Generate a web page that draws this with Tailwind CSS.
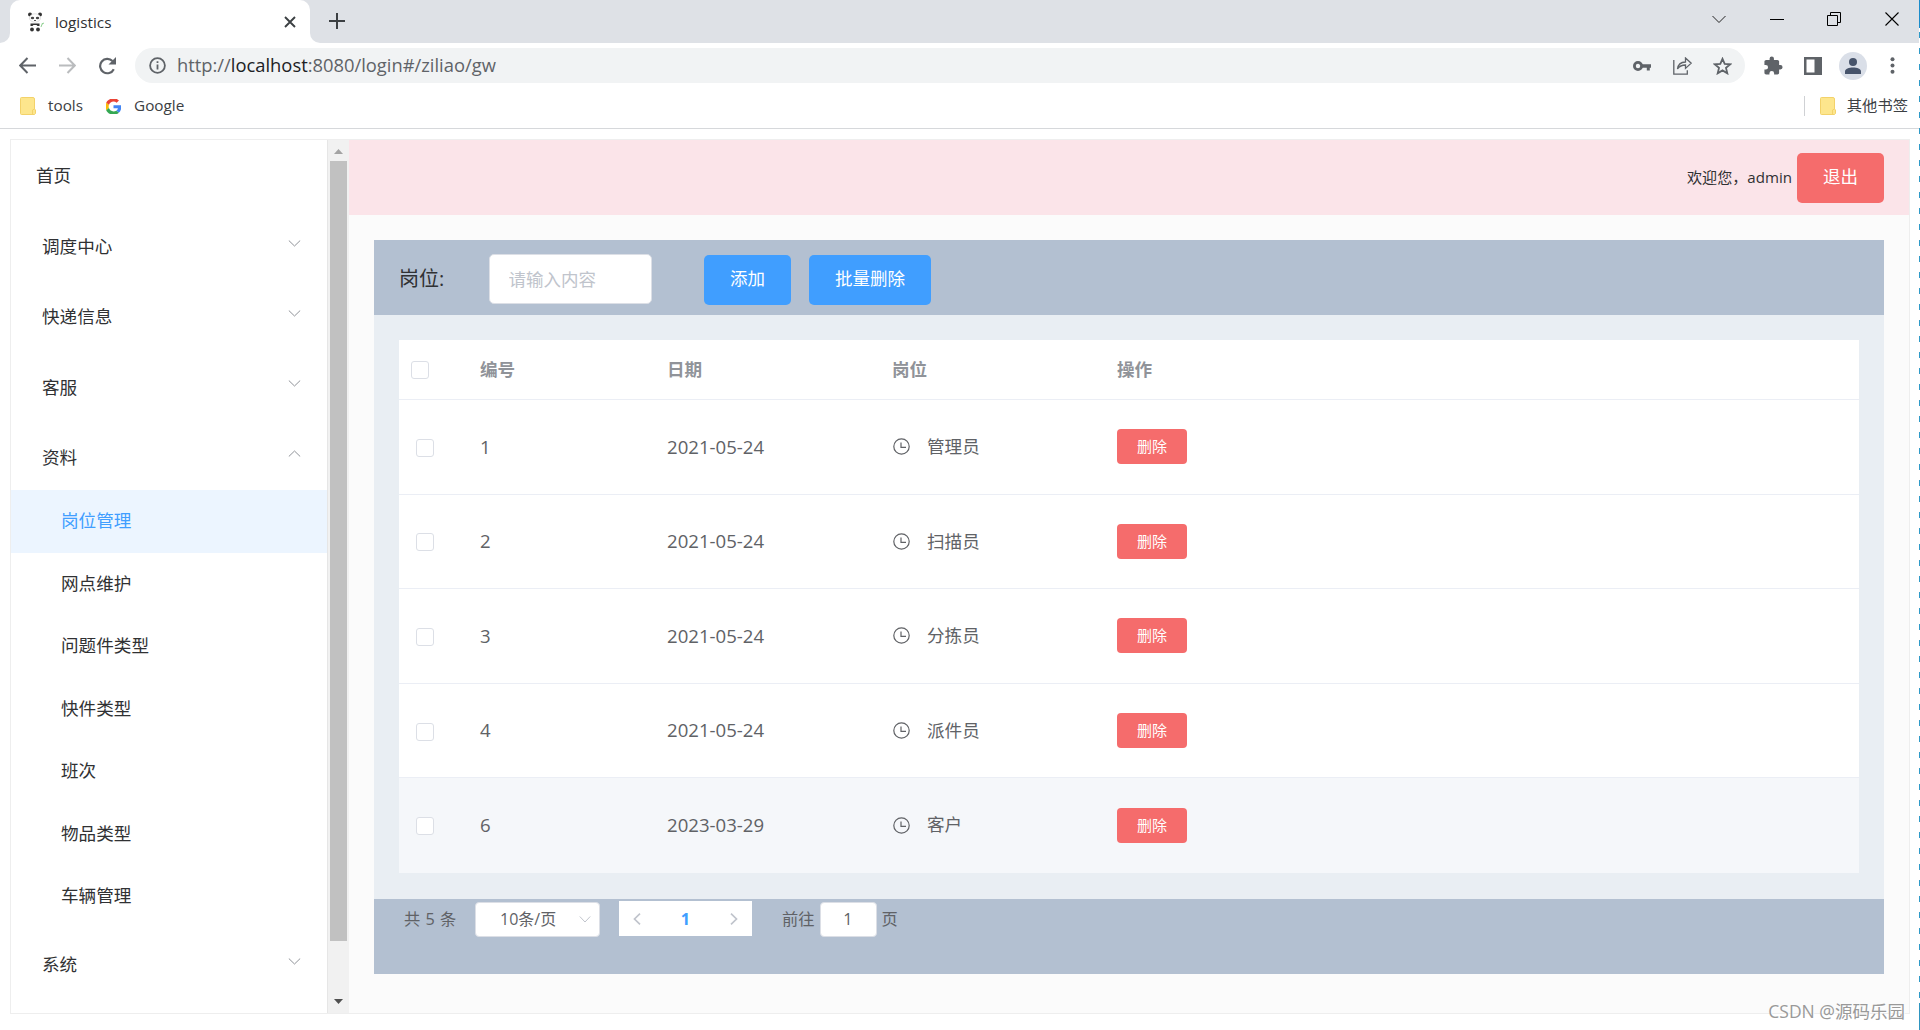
<!DOCTYPE html>
<html lang="zh-CN">
  <head>
    <meta charset="UTF-8" />
    <meta name="viewport" content="width=device-width, initial-scale=1.0" />
    <script src="https://cdn.jsdelivr.net/npm/@tailwindcss/browser@4"></script>
    <title>logistics</title>
  </head>
  <body
    class="relative w-[1920px] h-[1030px] overflow-hidden bg-white font-['Open_Sans','Noto_Sans_CJK_SC',sans-serif] text-[#303133]"
  >
    <!-- tab strip -->
    <div class="flex h-[43px] bg-[#dee1e6]">
      <div class="w-[10px] bg-white"><div class="h-full bg-[#dee1e6] rounded-br-[10px]"></div></div>
      <div class="flex items-center w-[300px] bg-white rounded-t-[10px] pl-[17px] pr-[14px]">
        <svg class="w-[19px] h-[20px]" viewBox="0 0 19 20">
          <circle cx="3" cy="2.5" r="2" fill="#333" />
          <circle cx="13" cy="2.5" r="2" fill="#333" />
          <ellipse cx="8" cy="6" rx="5.5" ry="4.2" fill="#fff" stroke="#ccc" stroke-width=".6" />
          <ellipse cx="5.5" cy="6" rx="1.7" ry="1.3" fill="#444" />
          <ellipse cx="10.5" cy="6" rx="1.7" ry="1.3" fill="#444" />
          <path d="M7 8.500h2" stroke="#555" />
          <path d="M3.500 11.500h9v2.500h-2l-1-1h-3l-1 1h-2z" fill="#333" />
          <circle cx="5" cy="17.500" r="1.900" fill="#333" />
          <circle cx="11" cy="17.500" r="1.900" fill="#333" />
          <path d="M14 15l1.500-4M15 12l2-1" stroke="#8fd092" />
        </svg>
        <span class="ml-[9px] mt-[2px] text-[15.300px] leading-none">logistics</span>
        <svg class="ml-auto w-[12px] h-[12px]" viewBox="0 0 12 12" stroke="#3c4043" stroke-width="1.900"><path d="M1 1l10 10M11 1L1 11" /></svg>
      </div>
      <div class="w-[10px] bg-white"><div class="h-full bg-[#dee1e6] rounded-bl-[10px]"></div></div>
      <svg class="ml-[9px] mt-[13px] w-[16px] h-[16px]" viewBox="0 0 16 16" stroke="#3c4043" stroke-width="2"><path d="M8 0v16M0 8h16" /></svg>
      <div class="ml-auto flex items-center h-[37px] gap-[43.500px] pr-[21.500px]">
        <svg class="w-[14px] h-[14px]" viewBox="0 0 14 14" fill="none" stroke="#222"><path d="M.5 4l6.500 6.500L13.500 4" /></svg>
        <svg class="w-[14px] h-[14px]" viewBox="0 0 14 14" stroke="#000"><path d="M0 7.500h14" /></svg>
        <svg class="w-[14px] h-[14px]" viewBox="0 0 14 14" fill="none" stroke="#000"><path d="M.5 3.500h10v10H.5zM3.500 3.500v-3h10v10h-3" /></svg>
        <svg class="w-[14px] h-[14px]" viewBox="0 0 14 14" stroke="#000" stroke-width="1.100"><path d="M.5 .5l13 13M13.500 .5l-13 13" /></svg>
      </div>
    </div>

    <!-- address bar -->
    <div class="flex items-center h-[45px]">
      <svg class="ml-[19px] w-[17px] h-[17px]" viewBox="0 0 17 17" fill="none" stroke="#5f6368" stroke-width="2"><path d="M17 8.500H1.500M8.500 1L1.200 8.500 8.500 16" /></svg>
      <svg class="ml-[23px] w-[17px] h-[17px]" viewBox="0 0 17 17" fill="none" stroke="#babcbe" stroke-width="2"><path d="M0 8.500h15.500M8.500 1l7.300 7.500L8.500 16" /></svg>
      <svg class="ml-[22px] w-[19px] h-[18px]" viewBox="0 0 19 18" fill="none" stroke="#5f6368" stroke-width="2.200"><path d="M15.800 12.200A7.200 7.200 0 1 1 14.500 4" /><path d="M18 0v7.500h-7.500z" fill="#5f6368" stroke="none" /></svg>
      <div class="ml-[18px] flex items-center w-[1610px] h-[35px] rounded-full bg-[#f1f3f4] pl-[14px] pr-[13px]">
        <svg class="w-[17px] h-[17px]" viewBox="0 0 17 17" fill="none" stroke="#5f6368" stroke-width="1.800"><circle cx="8.500" cy="8.500" r="7.400" /><path d="M8.500 7.500v5M8.500 4.200v1.900" /></svg>
        <span class="ml-[11px] text-[18.350px] leading-none text-[#5f6368]">http://<span class="text-[#202124]">localhost</span>:8080/login#/ziliao/gw</span>
        <svg class="ml-auto w-[18px] h-[12px]" viewBox="0 0 18 12"><circle cx="5" cy="6" r="3.600" fill="none" stroke="#5f6368" stroke-width="2.800" /><path d="M9 4.200h9v3.500h-1.200V10.500h-3V7.700H9z" fill="#5f6368" /></svg>
        <svg class="ml-[22px] w-[19px] h-[18px]" viewBox="0 0 19 18" fill="none" stroke="#5f6368" stroke-width="1.300"><path d="M.8 3v14.200h13.500v-4" /><path d="M4.500 12c.5-4.500 3.500-6.800 8-7V1l5.700 5.200-5.700 5.200V8c-3.500 0-6 1-8 4z" /></svg>
        <svg class="ml-[21px] w-[19px] h-[18px]" viewBox="0 0 19 18" fill="none" stroke="#5f6368" stroke-width="1.800"><path d="M9.500 1.800l2.200 5 5.500.5-4.200 3.600 1.300 5.400-4.800-2.900-4.800 2.900L6 10.900 1.800 7.300l5.500-.5z" /></svg>
      </div>
      <svg class="ml-[19px] w-[19px] h-[19px]" viewBox="1.500 0.500 22 22" fill="#5f6368"><path d="M20.500 11H19V7c0-1.100-.9-2-2-2h-4V3.500a2.500 2.500 0 0 0-5 0V5H4c-1.100 0-2 .9-2 2v3.800h1.500a2.700 2.700 0 0 1 0 5.400H2V20c0 1.100.9 2 2 2h3.800v-1.500a2.700 2.700 0 0 1 5.400 0V22H17c1.100 0 2-.9 2-2v-4h1.500a2.500 2.500 0 0 0 0-5z" /></svg>
      <svg class="ml-[21px] w-[18px] h-[18px]" viewBox="0 0 18 18"><path d="M0 0h18v18H0zM2.500 2.500v13h8v-13z" fill="#5f6368" fill-rule="evenodd" /></svg>
      <svg class="ml-[17px] w-[28px] h-[28px]" viewBox="0 0 28 28"><circle cx="14" cy="14" r="14" fill="#dadfe8" /><g fill="#47546b"><circle cx="14" cy="10" r="4" /><path d="M6 22v-2.500c0-2.800 4-4 8-4s8 1.200 8 4V22z" /></g></svg>
      <svg class="ml-[23px] w-[5px] h-[17px]" viewBox="0 0 5 17" fill="#5f6368"><circle cx="2.500" cy="2.200" r="2" /><circle cx="2.500" cy="8.500" r="2" /><circle cx="2.500" cy="14.800" r="2" /></svg>
    </div>

    <!-- bookmarks -->
    <div class="flex items-center h-[41px] pb-[4px] border-b border-[#d6d8db] text-[15.300px] leading-none text-[#3c4043]">
      <svg class="ml-[20px] w-[16px] h-[18px]" viewBox="0 0 16 18"><path d="M1.500.5h11.500a1.500 1.500 0 0 1 1.500 1.500v10l1 1v3.500l-1 1H1.500a1 1 0 0 1-1-1v-15a1 1 0 0 1 1-1z" fill="#fde68d" stroke="#f3d26a" /><path d="M12.500 17v-4l2-1" fill="none" stroke="#f3d26a" /></svg>
      <span class="ml-[12px]">tools</span>
      <svg class="ml-[23px] w-[15px] h-[15px]" viewBox="2 2 44 44"><path fill="#ea4335" d="M24 9.500c3.540 0 6.710 1.220 9.210 3.600l6.850-6.850C35.900 2.380 30.470 0 24 0 14.620 0 6.510 5.380 2.560 13.220l7.980 6.190C12.430 13.720 17.740 9.500 24 9.500z" /><path fill="#4285f4" d="M46.980 24.550c0-1.570-.15-3.090-.38-4.550H24v9.020h12.940c-.58 2.960-2.260 5.480-4.780 7.180l7.730 6c4.510-4.180 7.090-10.360 7.090-17.650z" /><path fill="#fbbc05" d="M10.530 28.590c-.48-1.450-.76-2.990-.76-4.590s.27-3.140.76-4.590l-7.980-6.190C.92 16.460 0 20.120 0 24c0 3.880.92 7.540 2.560 10.780l7.970-6.190z" /><path fill="#34a853" d="M24 48c6.480 0 11.930-2.130 15.890-5.810l-7.730-6c-2.150 1.450-4.920 2.300-8.160 2.300-6.260 0-11.570-4.220-13.470-9.910l-7.980 6.190C6.510 42.620 14.620 48 24 48z" /></svg>
      <span class="ml-[13px]">Google</span>
      <div class="ml-auto w-px h-[20px] bg-[#cfd1d4]"></div>
      <svg class="ml-[15px] w-[16px] h-[18px]" viewBox="0 0 16 18"><path d="M1.500.5h11.500a1.500 1.500 0 0 1 1.500 1.500v10l1 1v3.500l-1 1H1.500a1 1 0 0 1-1-1v-15a1 1 0 0 1 1-1z" fill="#fde68d" stroke="#f3d26a" /><path d="M12.500 17v-4l2-1" fill="none" stroke="#f3d26a" /></svg>
      <span class="ml-[11px] mr-[12px]">其他书签</span>
    </div>

    <!-- page -->
    <div class="flex w-[1900px] h-[875px] ml-[10px] mt-[10px] border border-[#eee]">
      <aside class="w-[317px] border-r border-[#e6e6e6] text-[17.600px] leading-none">
        <div class="flex items-center h-[68px] pl-[25px] pt-[4px]">首页</div>
        <div class="flex items-center justify-between h-[70px] pl-[31px] pr-[26px]">
          <span class="pt-[8px]">调度中心</span>
          <svg class="w-[13px] h-[7px]" viewBox="0 0 13 7" fill="none" stroke="#909399"><path d="M.8 .5l5.700 5.500L12.200 .5" /></svg>
        </div>
        <div class="flex items-center justify-between h-[70px] pl-[31px] pr-[26px]">
          <span class="pt-[8px]">快递信息</span>
          <svg class="w-[13px] h-[7px]" viewBox="0 0 13 7" fill="none" stroke="#909399"><path d="M.8 .5l5.700 5.500L12.200 .5" /></svg>
        </div>
        <div class="flex items-center justify-between h-[70px] pl-[31px] pr-[26px]">
          <span class="pt-[9px]">客服</span>
          <svg class="w-[13px] h-[7px]" viewBox="0 0 13 7" fill="none" stroke="#909399"><path d="M.8 .5l5.700 5.500L12.200 .5" /></svg>
        </div>
        <div class="flex items-center justify-between h-[72px] pl-[31px] pr-[26px] pb-[2px]">
          <span class="pt-[9px]">资料</span>
          <svg class="w-[13px] h-[7px]" viewBox="0 0 13 7" fill="none" stroke="#909399"><path d="M.8 6.500L6.500 1l5.700 5.500" /></svg>
        </div>
        <div class="flex items-center h-[62.500px] pl-[50px] bg-[#ecf5ff] text-[#409eff]">岗位管理</div>
        <div class="flex items-center h-[62.500px] pl-[50px] pt-px">网点维护</div>
        <div class="flex items-center h-[62.500px] pl-[50px]">问题件类型</div>
        <div class="flex items-center h-[62.500px] pl-[50px] pt-px">快件类型</div>
        <div class="flex items-center h-[62.500px] pl-[50px]">班次</div>
        <div class="flex items-center h-[62.500px] pl-[50px] pt-px">物品类型</div>
        <div class="flex items-center h-[62.500px] pl-[50px]">车辆管理</div>
        <div class="flex items-center justify-between h-[70px] pl-[31px] pr-[26px] pb-[2px]">
          <span class="pt-[7px]">系统</span>
          <svg class="w-[13px] h-[7px]" viewBox="0 0 13 7" fill="none" stroke="#909399"><path d="M.8 .5l5.700 5.500L12.200 .5" /></svg>
        </div>
      </aside>
      <!-- scrollbar -->
      <div class="flex flex-col items-center w-[21px] bg-[#f1f1f1]">
        <svg class="mt-[9px] w-[9px] h-[5px]" viewBox="0 0 9 5" fill="#a3a3a3"><path d="M0 5L4.500 0 9 5z" /></svg>
        <div class="mt-[7px] w-[17px] h-[780px] bg-[#c1c1c1]"></div>
        <svg class="mt-[58px] w-[9px] h-[5px]" viewBox="0 0 9 5" fill="#505050"><path d="M0 0l4.500 5L9 0z" /></svg>
      </div>

      <div class="flex-1 bg-[#fbfbfb]">
        <header class="flex items-center justify-end h-[75px] pr-[25px] bg-[#fbe4e9]">
          <span class="text-[15.100px] leading-none">欢迎您，admin</span>
          <button class="ml-[5px] w-[87px] h-[50px] pb-[2px] rounded-[5px] bg-[#f56c6c] text-white text-[17.500px] leading-none">退出</button>
        </header>
        <main class="ml-[25px] mt-[25px] w-[1510px]">
          <div class="flex items-center h-[75px] pl-[25px] bg-[#b3c0d1]">
            <label class="w-[90px] pt-[2px] text-[20px] leading-none">岗位:</label>
            <input type="text" placeholder="请输入内容" class="w-[163px] h-[50px] mt-[3px] px-[18.500px] rounded-[5px] border border-[#dcdfe6] bg-white text-[17.500px] placeholder:text-[#c0c4cc]" />
            <button class="ml-[52px] mt-[5px] pb-[2px] w-[87px] h-[50px] rounded-[5px] bg-[#409eff] text-white text-[17.500px] leading-none">添加</button>
            <button class="ml-[18px] mt-[5px] pb-[2px] w-[122px] h-[50px] rounded-[5px] bg-[#409eff] text-white text-[17.500px] leading-none">批量删除</button>
          </div>
          <div class="h-[584px] p-[25px] bg-[#e9eef3]">
            <div class="bg-white text-[17.600px] leading-none text-[#606266]">
              <div class="flex items-center h-[60px] pl-[12px] border-b border-[#ebeef5] font-bold text-[#909399]">
                <span class="w-[69px]"><i class="block w-[18px] h-[18px] rounded-[3px] border border-[#dcdfe6] bg-white"></i></span>
                <span class="w-[187px] pt-px">编号</span><span class="w-[225px] pt-px">日期</span><span class="w-[225px] pt-px">岗位</span><span class="pt-px">操作</span>
              </div>
              <div id="rows"></div>
            </div>
          </div>
          <div class="flex items-start h-[75px] pl-[30px] pt-[2px] bg-[#b3c0d1] text-[16.250px] leading-[35px] text-[#606266]">
            <span class="w-[71px] pt-px [word-spacing:1px]">共 5 条</span>
            <div class="flex items-center justify-between mt-px w-[125px] h-[35px] pl-[24px] pr-[8px] rounded-[4px] border border-[#dcdfe6] bg-white">
              <span class="text-[16px]">10条/页</span>
              <svg class="w-[12px] h-[7px]" viewBox="0 0 12 7" fill="none" stroke="#c0c4cc"><path d="M.8 .5L6 6 11.200 .5" /></svg>
            </div>
            <div class="flex items-center justify-between ml-[19px] w-[133px] h-[35px] px-[14px] bg-white">
              <svg class="w-[8px] h-[12px]" viewBox="0 0 8 12" fill="none" stroke="#c0c4cc" stroke-width="1.700"><path d="M7 .7L1.500 6 7 11.300" /></svg>
              <b class="pt-px text-[#409eff]">1</b>
              <svg class="w-[8px] h-[12px]" viewBox="0 0 8 12" fill="none" stroke="#c0c4cc" stroke-width="1.700"><path d="M1 .7L6.500 6 1 11.300" /></svg>
            </div>
            <span class="ml-[30px] pt-px">前往</span>
            <div class="ml-[5px] mt-px w-[57px] h-[35px] rounded-[4px] border border-[#dcdfe6] bg-white text-center leading-[33px]">1</div>
            <span class="ml-[5px] pt-px">页</span>
          </div>
        </main>
      </div>
    </div>

    <!-- dashed edge on the right side of the window -->
    <div class="absolute right-0 top-0 w-px h-full bg-[repeating-linear-gradient(to_bottom,#2f9ac8_0px,#2f9ac8_6px,#ffffff_6px,#ffffff_16px)]"></div>
    <div class="absolute right-0 top-0 w-px h-[28px] bg-[#1b8ccb]"></div>
    <div class="absolute right-0 bottom-0 w-px h-[27px] bg-[#2f95c0]"></div>
    <div class="absolute right-[15px] bottom-[10px] text-[17.500px] leading-none text-[#999] whitespace-nowrap [text-shadow:1px_1px_0_#fff]">CSDN @源码乐园</div>

    <script>
      const list = [
        { id: 1, date: "2021-05-24", name: "管理员" },
        { id: 2, date: "2021-05-24", name: "扫描员" },
        { id: 3, date: "2021-05-24", name: "分拣员" },
        { id: 4, date: "2021-05-24", name: "派件员" },
        { id: 6, date: "2023-03-29", name: "客户" },
      ];

      document.getElementById("rows").innerHTML = list
        .map(
          (item, i) => `
          <div class="flex items-center h-[94.600px] pl-[17px] border-b ${i === 4 ? "bg-[#f5f7fa] border-[#f5f7fa]" : "border-[#ebeef5]"}">
            <span class="w-[64px] pt-[2px]"><i class="block w-[18px] h-[18px] rounded-[3px] border border-[#dcdfe6] bg-white"></i></span>
            <span class="w-[187px] text-[18.600px]">${item.id}</span>
            <span class="w-[226px] text-[18.600px]">${item.date}</span>
            <svg class="w-[17px] h-[17px] mr-[17px]" viewBox="0 0 17 17" fill="none" stroke="#606266" stroke-width="1.200"><circle cx="8.500" cy="8.500" r="7.700" /><path d="M8 4.500v4.800h5" /></svg>
            <span class="w-[190px]">${item.name}</span>
            <button class="w-[70px] h-[35px] rounded-[4px] bg-[#f56c6c] text-white text-[15px] leading-none">删除</button>
          </div>`
        )
        .join("");
    </script>
  </body>
</html>
